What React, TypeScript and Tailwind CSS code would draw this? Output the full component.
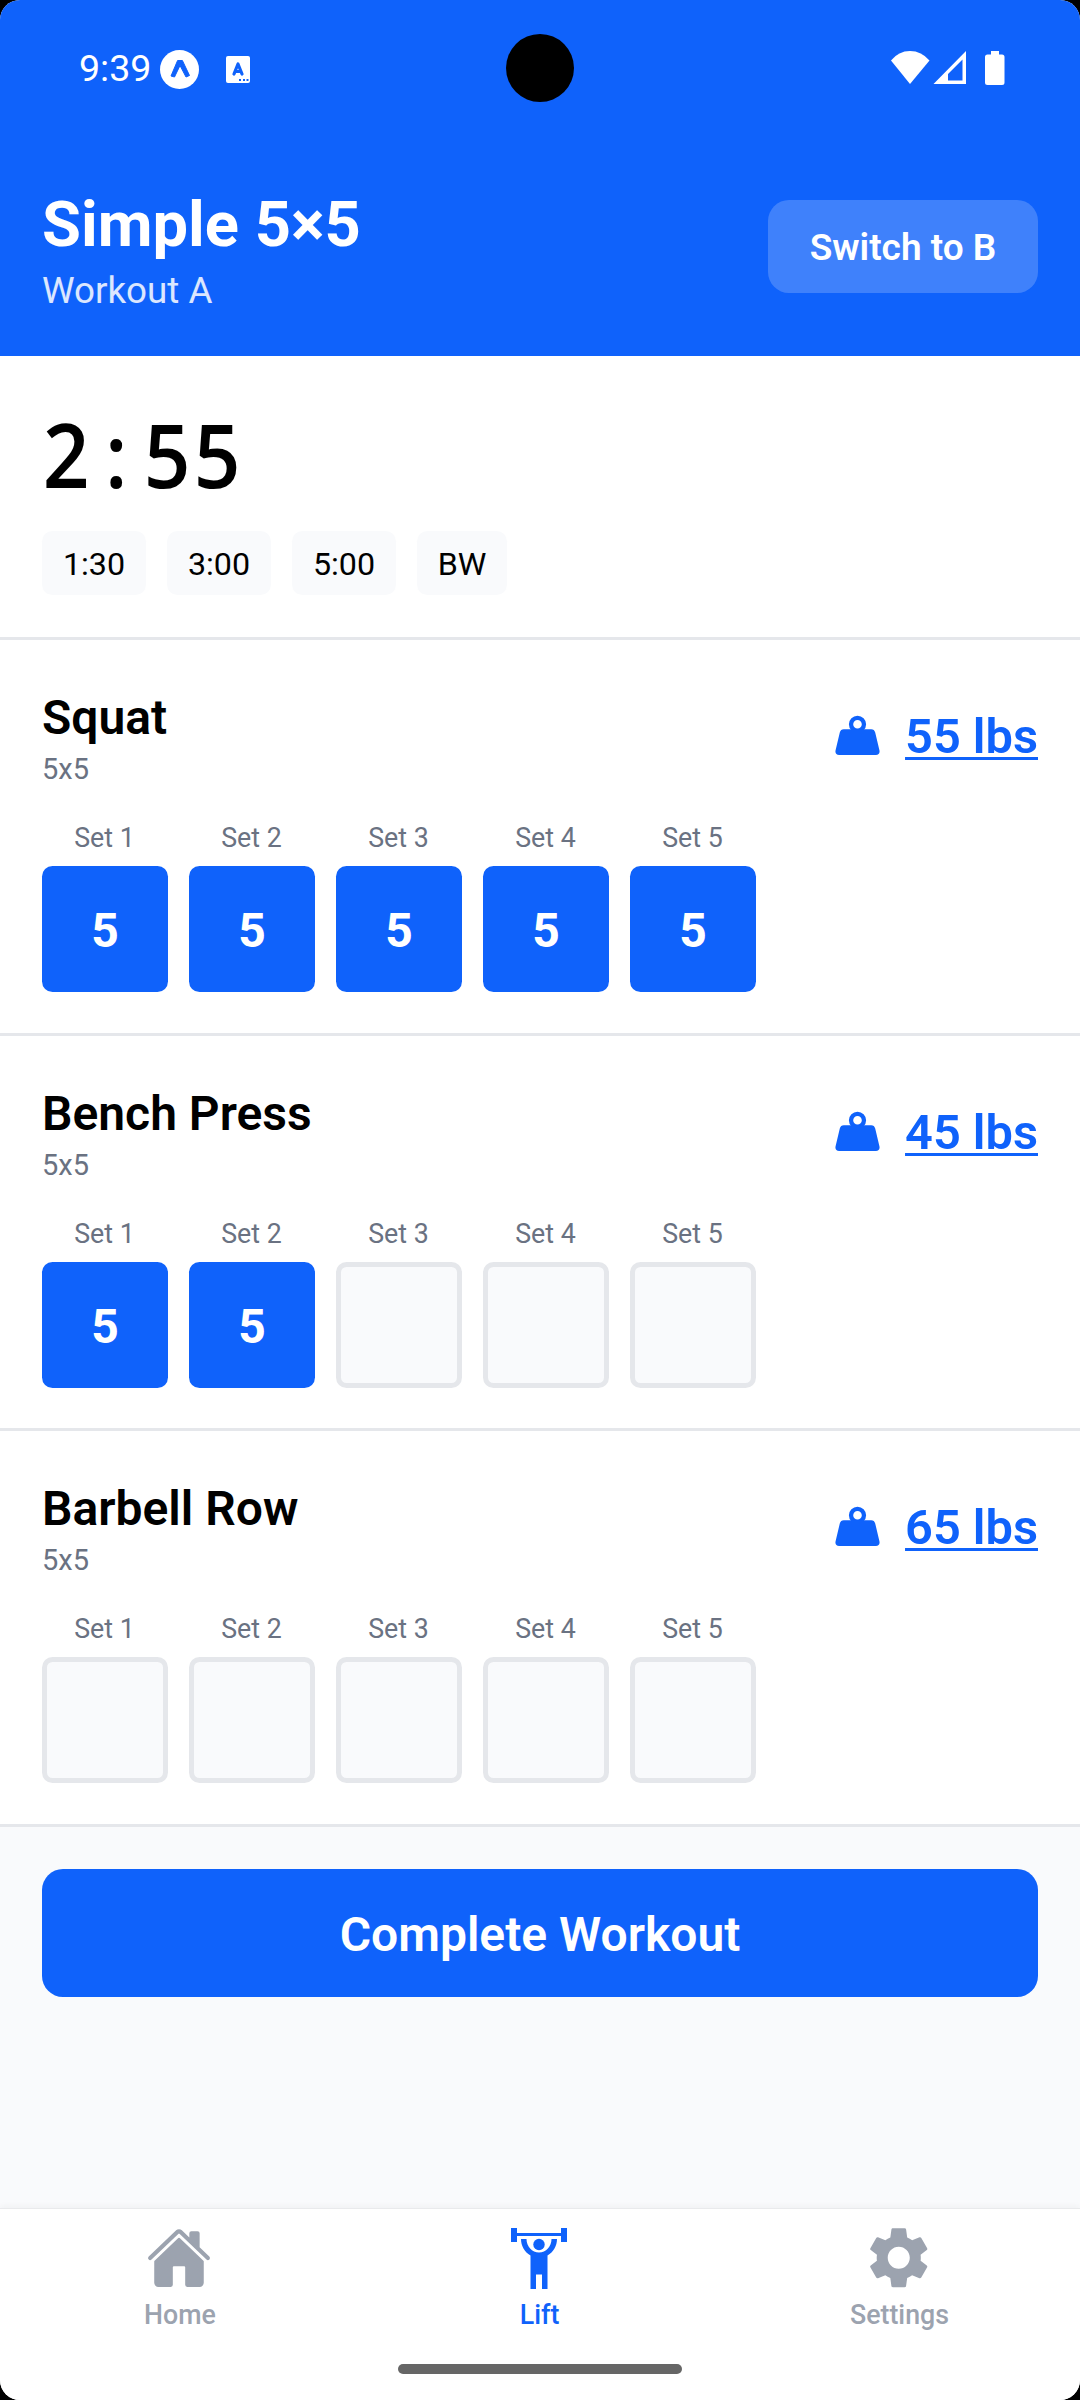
import React from "react";
import { IoHome } from "react-icons/io5";
import { MdSettings } from "react-icons/md";

const exercises = [
  { name: "Squat", weight: "55 lbs", done: 5 },
  { name: "Bench Press", weight: "45 lbs", done: 2 },
  { name: "Barbell Row", weight: "65 lbs", done: 0 },
];

function StatusBar() {
  return (
    <div className="relative flex h-[136px] items-center justify-between pr-[75px] pl-[79px] text-white">
      <div className="flex items-center">
        <span className="w-[81px] pt-[1px] text-[37.5px] leading-none">9:39</span>
        <svg className="mt-[3px]" width="39" height="40" viewBox="0 0 39 40">
          <ellipse cx="19.5" cy="19.5" rx="19.5" ry="19.5" fill="#fff" />
          <path d="M11 26 L17.600 10.500 H22.400 L29.500 25.500 L26 27 L20 15.500 L14.500 27Z" fill="#0f62fb" stroke="#0f62fb" strokeWidth="1" strokeLinejoin="round" />
        </svg>
        <svg className="mt-[3px] ml-[27px]" width="24" height="28" viewBox="0 0 24 28">
          <rect width="24" height="27" rx="2" fill="#fff" />
          <path d="M8 18 L12 8 L16 18 M9.5 15.5 H14.5" fill="none" stroke="#0f62fb" strokeWidth="3.2" strokeLinecap="round" strokeLinejoin="round" />
          <path d="M13 24h2M17 24h2M20.500 24h2" stroke="#0f62fb" strokeWidth="2" />
        </svg>
      </div>
      <div className="absolute top-[34px] left-[506px] size-[68px] rounded-full bg-black" />
      <svg width="115" height="36" viewBox="0 0 115 36">
        <path d="M1 10.500 Q8.500 1 20 1 Q31.500 1 39.500 10.500 L20 34Z" fill="#fff" />
        <path fillRule="evenodd" d="M76 1 V34 H43.500Z M72.500 9.500 L58 24 V30.500 H72.500Z" fill="#fff" />
        <path d="M101 1h8v3.500h3a2.500 2.500 0 0 1 2.500 2.500v25.500a2.500 2.500 0 0 1-2.500 2.500h-14.500a2.500 2.500 0 0 1-2.500-2.500v-25.500a2.500 2.500 0 0 1 2.500-2.500h3.500z" fill="#fff" />
      </svg>
    </div>
  );
}

function WeightIcon() {
  return (
    <svg className="mb-[3px]" width="45" height="41" viewBox="0 0 46 41">
      <circle cx="23" cy="9" r="6.600" fill="none" stroke="currentColor" strokeWidth="4.400" />
      <path d="M9 14h28c2.200 0 3.600 1.200 4.100 3.400l4.300 18.200c.7 2.800-.8 4.900-3.600 4.900H4.200c-2.800 0-4.300-2.100-3.600-4.900l4.300-18.200C5.400 15.200 6.800 14 9 14z" fill="currentColor" />
    </svg>
  );
}

function Exercise({ name, weight, done }: { name: string; weight: string; done: number }) {
  return (
    <section className="h-[395.6px] border-b-[3px] border-[#e5e7eb] bg-white px-[42px] pt-[43px]">
      <div className="flex h-[108px] items-center justify-between">
        <div>
          <h2 className="pt-[1px] text-[48px] leading-[64px] font-semibold text-black">{name}</h2>
          <p className="text-[29px] leading-[39px] text-gray-500">5x5</p>
        </div>
        <div className="flex items-center gap-[25px] text-[#0f62fb]">
          <WeightIcon />
          <span className="text-[48.75px] leading-[56px] font-semibold underline decoration-[3px] underline-offset-[4px]">{weight}</span>
        </div>
      </div>
      <div className="mt-[27px] flex gap-[21px]">
        {[1, 2, 3, 4, 5].map((n) => (
          <div key={n} className="flex w-[126px] flex-col items-center">
            <span className="mb-[8px] pr-[1px] text-[26.75px] leading-[40px] text-gray-500">Set {n}</span>
            {n <= done ? (
              <div className="flex size-[126px] items-center justify-center rounded-[10.5px] bg-[#0f62fb] pt-[4px] text-[48px] font-bold text-white">5</div>
            ) : (
              <div className="size-[126px] rounded-[10.5px] border-[5px] border-[#e5e7eb] bg-[#f9fafc]" />
            )}
          </div>
        ))}
      </div>
    </section>
  );
}

function LifterIcon() {
  return (
    <svg width="56" height="61" viewBox="0 0 56 61" fill="currentColor">
      <path d="M0 0h6v5h44V0h6v14h-6V8H6v6H0z" />
      <circle cx="28" cy="16.500" r="5.700" />
      <path d="M10 11h5.500c0 7.500 5.500 13.500 12.500 13.500S40.500 18.500 40.500 11H46c0 7-3.500 13-9.500 16.500V61H31V46.500h-6V61h-5.500V27.500C13.500 24 10 18 10 11z" />
    </svg>
  );
}

export default function App() {
  return (
    <div className="h-[2400px] w-[1080px] bg-black font-['Roboto',sans-serif]">
      <div className="relative flex h-full flex-col overflow-hidden rounded-[20px] bg-[#f9fafc]">
        <header className="h-[356px] shrink-0 bg-[#0f62fb]">
          <StatusBar />
          <div className="flex items-center justify-between px-[42px] pt-[43px] text-white">
            <div className="pt-[3px]">
              <h1 className="text-[63.25px] leading-[84px] font-bold">Simple 5×5</h1>
              <p className="text-[36.75px] leading-[49px] text-white/85">Workout A</p>
            </div>
            <button className="mb-[2px] h-[93px] w-[270px] rounded-[21px] bg-white/20 pt-[4px] text-[37px] font-semibold">Switch to B</button>
          </div>
        </header>

        <section className="h-[284px] shrink-0 border-b-[3px] border-[#e5e7eb] bg-white px-[42px] pt-[42px]">
          <div className="-ml-px flex h-[111px] items-center font-['Open_Sans',sans-serif] text-[88px] leading-none font-semibold text-black">
            {"2:55".split("").map((c, i) => (
              <span key={i} className="w-[50.4px] scale-x-[0.93] text-center">{c}</span>
            ))}
          </div>
          <div className="mt-[22px] flex gap-[21px] text-[32.25px] text-black">
            {["1:30", "3:00", "5:00"].map((t) => (
              <button key={t} className="h-[64px] w-[104px] rounded-[10.5px] bg-[#f9fafc] pt-[2px]">{t}</button>
            ))}
            <button className="h-[64px] w-[90px] rounded-[10.5px] bg-[#f9fafc] pt-[2px]">BW</button>
          </div>
        </section>

        <main className="shrink-0">
          {exercises.map((e) => (
            <Exercise key={e.name} {...e} />
          ))}
        </main>

        <div className="grow px-[42px] pt-[42px]">
          <button className="h-[128px] w-full rounded-[21px] bg-[#0f62fb] pt-[5px] text-[48px] font-semibold text-white">Complete Workout</button>
        </div>

        <nav className="relative flex h-[192px] shrink-0 border-t border-[#e9eaec] bg-white text-[26.75px] font-medium text-[#9ca3af] shadow-[0_-2px_6px_rgba(0,0,0,0.04)]">
          <div className="flex flex-1 flex-col items-center pt-[13px]">
            <div className="flex h-[72px] items-center pr-[2px]"><IoHome size={66} /></div>
            <span className="mt-[5px] leading-[32px]">Home</span>
          </div>
          <div className="flex flex-1 flex-col items-center pt-[13px] text-[#0f62fb]">
            <div className="flex h-[72px] items-center pr-[2px]"><LifterIcon /></div>
            <span className="mt-[5px] pr-[1px] leading-[32px]">Lift</span>
          </div>
          <div className="flex flex-1 flex-col items-center pt-[13px]">
            <div className="flex h-[72px] items-center pr-[2px]"><MdSettings size={73.5} /></div>
            <span className="mt-[5px] pr-[1px] leading-[32px]">Settings</span>
          </div>
          <div className="absolute bottom-[26px] left-[398px] h-[10px] w-[284px] rounded-full bg-[#666666]" />
        </nav>
      </div>
    </div>
  );
}
